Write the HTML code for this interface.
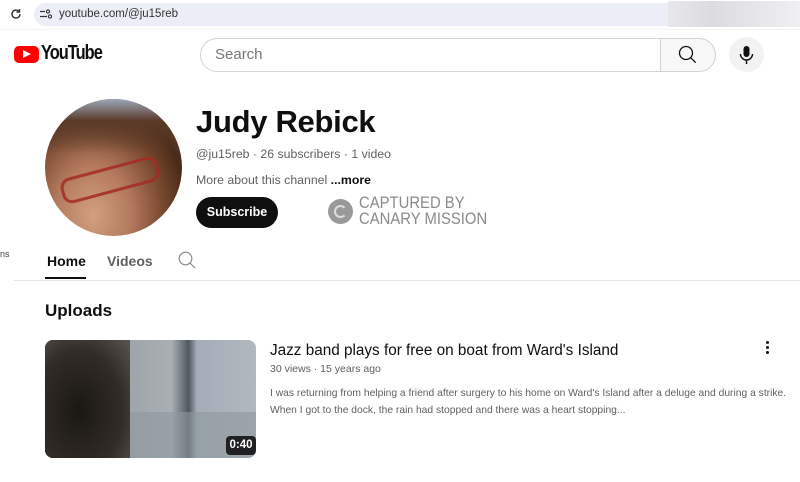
<!DOCTYPE html>
<html><head><style>
*{margin:0;padding:0;box-sizing:border-box}
body{width:800px;height:482px;overflow:hidden;background:#fff;font-family:"Liberation Sans",Arial,sans-serif;position:relative;color:#0f0f0f}
.a{position:absolute}
</style></head><body>
<div class="a" style="left:34px;top:3px;width:640px;height:23px;background:#ebedf7;border-radius:12px 0 0 12px"></div>
<div class="a" style="left:668px;top:1px;width:132px;height:26px;background:linear-gradient(90deg,#e8e8ec,#dcdce0,#e6e6ea,#f0f0f2)"></div>
<svg class="a" style="left:10px;top:8px" width="12" height="12" viewBox="0 0 12 12"><path d="M10 6a4 4 0 1 1-1.2-2.8" fill="none" stroke="#333" stroke-width="1.4"/><path d="M9.5 1v3h-3" fill="none" stroke="#333" stroke-width="1.4"/></svg>
<svg class="a" style="left:40px;top:9px" width="12" height="10" viewBox="0 0 12 10"><path d="M0 2.5h5M0 7.5h7" stroke="#333" stroke-width="1.2"/><circle cx="8" cy="2.5" r="1.6" fill="none" stroke="#333" stroke-width="1.1"/><circle cx="10" cy="7.5" r="1.6" fill="none" stroke="#333" stroke-width="1.1"/></svg>
<div class="a" style="left:59px;top:8px;font-size:11.5px;color:#333">youtube.com/@ju15reb</div>
<div class="a" style="left:0;top:29px;width:800px;height:1px;background:#f2f2f2"></div>
<div class="a" style="left:14px;top:46px;width:25px;height:17px;background:#f00;border-radius:5px"></div>
<div class="a" style="left:23px;top:50px;width:0;height:0;border-left:8px solid #fff;border-top:4.5px solid transparent;border-bottom:4.5px solid transparent"></div>
<div class="a" style="left:41px;top:42px;font-size:20px;font-weight:bold;letter-spacing:-1.2px;transform:scaleX(.82);transform-origin:left">YouTube</div>
<div class="a" style="left:200px;top:38px;width:516px;height:34px;border:1px solid #d3d3d3;border-radius:17px"></div>
<div class="a" style="left:660px;top:38px;width:56px;height:34px;background:#f8f8f8;border:1px solid #d3d3d3;border-radius:0 17px 17px 0"></div>
<div class="a" style="left:215px;top:46px;font-size:15px;color:#777">Search</div>
<svg class="a" style="left:678px;top:45px" width="19" height="19" viewBox="0 0 19 19"><circle cx="8" cy="8" r="6.5" fill="none" stroke="#111" stroke-width="1.3"/><path d="M12.7 12.7l5 5" stroke="#111" stroke-width="1.3"/></svg>
<div class="a" style="left:729px;top:37px;width:35px;height:35px;border-radius:50%;background:#f2f2f2"></div>
<svg class="a" style="left:738px;top:45px" width="17" height="20" viewBox="0 0 17 20"><rect x="5.5" y="1" width="6" height="11" rx="3" fill="#111"/><path d="M2.5 9a6 6 0 0 0 12 0M8.5 15v4" fill="none" stroke="#111" stroke-width="1.4"/></svg>
<div class="a" style="left:45px;top:99px;width:137px;height:137px;border-radius:50%;overflow:hidden;background:radial-gradient(ellipse at 35% 85%,#d0a080 0,#b47a5e 30%,#7a4a30 55%,#4a2a18 75%,#6b5040 100%)">
<div class="a" style="left:0;top:0;width:137px;height:55px;background:linear-gradient(180deg,#9aa8b8 0,#5a3a28 40%,rgba(74,42,24,0) 100%)"></div>
<div class="a" style="left:15px;top:68px;width:100px;height:26px;border:3px solid #a52a22;border-radius:10px;transform:rotate(-15deg);opacity:.85"></div>
</div>
<div class="a" style="left:196px;top:104px;font-size:31px;font-weight:bold;letter-spacing:-.3px">Judy Rebick</div>
<div class="a" style="left:196px;top:147px;font-size:12.3px;color:#606060">@ju15reb · 26 subscribers · 1 video</div>
<div class="a" style="left:196px;top:173px;font-size:12.3px;color:#606060">More about this channel <b style="color:#0f0f0f">...more</b></div>
<div class="a" style="left:196px;top:197px;width:82px;height:31px;background:#0f0f0f;border-radius:16px;color:#fff;font-size:12.5px;font-weight:bold;text-align:center;line-height:31px">Subscribe</div>
<div class="a" style="left:328px;top:199px;width:25px;height:25px;border-radius:50%;background:#999"></div>
<div class="a" style="left:334px;top:205px;width:13px;height:13px;border-radius:50%;border:2px solid #ddd;border-right-color:transparent"></div>
<div class="a" style="left:359px;top:195px;font-size:16.5px;color:#8a8a8a;line-height:16px;transform:scaleX(.9);transform-origin:left">CAPTURED BY<br>CANARY MISSION</div>
<div class="a" style="left:0;top:249px;font-size:9px;color:#444">ns</div>
<div class="a" style="left:47px;top:253px;font-size:14px;font-weight:bold;color:#0f0f0f">Home</div>
<div class="a" style="left:45px;top:277px;width:41px;height:2px;background:#0f0f0f"></div>
<div class="a" style="left:107px;top:253px;font-size:14px;font-weight:bold;color:#606060">Videos</div>
<svg class="a" style="left:178px;top:251px" width="18" height="18" viewBox="0 0 18 18"><circle cx="7.5" cy="7.5" r="6.3" fill="none" stroke="#888" stroke-width="1.2"/><path d="M12 12l5 5" stroke="#888" stroke-width="1.2"/></svg>
<div class="a" style="left:14px;top:280px;width:786px;height:1px;background:#e5e5e5"></div>
<div class="a" style="left:45px;top:301px;font-size:17px;font-weight:bold">Uploads</div>
<div class="a" style="left:45px;top:340px;width:211px;height:118px;border-radius:8px;overflow:hidden;background:linear-gradient(90deg,#2a2622 0,#3a3530 35%,#9da4a8 38%,#a9b0b5 60%,#4e5860 68%,#a4adb5 72%,#b0b8c0 100%)">
<div class="a" style="left:0;top:0;width:85px;height:118px;background:radial-gradient(ellipse at 40% 60%,#1a1714,#322c26 60%,#5a564f)"></div>
<div class="a" style="left:85px;top:72px;width:126px;height:46px;background:#8e979e;opacity:.6"></div>
<div class="a" style="left:181px;top:96px;width:30px;height:19px;background:rgba(0,0,0,.8);border-radius:4px;color:#fff;font-size:11.5px;font-weight:bold;text-align:center;line-height:19px">0:40</div>
</div>
<div class="a" style="left:270px;top:342px;font-size:15.3px;color:#0f0f0f">Jazz band plays for free on boat from Ward's Island</div>
<div class="a" style="left:270px;top:363px;font-size:10.5px;color:#606060">30 views · 15 years ago</div>
<div class="a" style="left:270px;top:385px;font-size:10.3px;color:#606060;line-height:17px;white-space:nowrap">I was returning from helping a friend after surgery to his home on Ward's Island after a deluge and during a strike.<br>When I got to the dock, the rain had stopped and there was a heart stopping...</div>
<div class="a" style="left:766px;top:341px;width:3px;height:3px;border-radius:50%;background:#111;box-shadow:0 5px 0 #111,0 10px 0 #111"></div>
</body></html>
